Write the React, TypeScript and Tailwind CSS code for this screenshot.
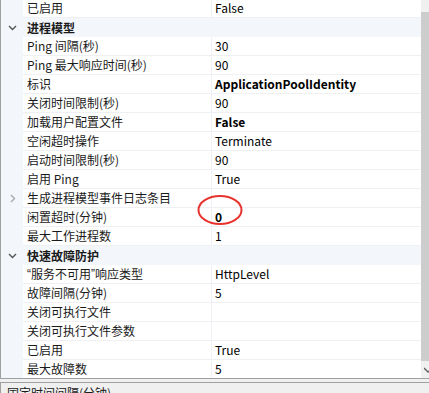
import React from "react"

type Row =
  | { kind: "cat"; name: string }
  | { kind: "prop"; name: React.ReactNode; value?: string; bold?: boolean; expand?: boolean }

const q = (c: string) => <span style={{ fontFamily: '"Liberation Sans", sans-serif' }}>{c}</span>

const rows: Row[] = [
  { kind: "prop", name: "已启用", value: "False" },
  { kind: "cat", name: "进程模型" },
  { kind: "prop", name: "Ping 间隔(秒)", value: "30" },
  { kind: "prop", name: "Ping 最大响应时间(秒)", value: "90" },
  { kind: "prop", name: "标识", value: "ApplicationPoolIdentity", bold: true },
  { kind: "prop", name: "关闭时间限制(秒)", value: "90" },
  { kind: "prop", name: "加载用户配置文件", value: "False", bold: true },
  { kind: "prop", name: "空闲超时操作", value: "Terminate" },
  { kind: "prop", name: "启动时间限制(秒)", value: "90" },
  { kind: "prop", name: "启用 Ping", value: "True" },
  { kind: "prop", name: "生成进程模型事件日志条目", expand: true },
  { kind: "prop", name: "闲置超时(分钟)", value: "0", bold: true },
  { kind: "prop", name: "最大工作进程数", value: "1" },
  { kind: "cat", name: "快速故障防护" },
  {
    kind: "prop",
    name: (
      <>
        {q("“")}服务不可用{q("”")}响应类型
      </>
    ),
    value: "HttpLevel",
  },
  { kind: "prop", name: "故障间隔(分钟)", value: "5" },
  { kind: "prop", name: "关闭可执行文件" },
  { kind: "prop", name: "关闭可执行文件参数" },
  { kind: "prop", name: "已启用", value: "True" },
  { kind: "prop", name: "最大故障数", value: "5" },
]

function ChevronDown() {
  return (
    <svg width="9" height="6" viewBox="0 0 9 6" className="text-[#555]">
      <path d="M1 1 L4.5 4.5 L8 1" fill="none" stroke="currentColor" strokeWidth="1.4" />
    </svg>
  )
}

function ChevronRight() {
  return (
    <svg width="6" height="9" viewBox="0 0 6 9" className="text-[#a8a8a8]">
      <path d="M1 1 L4.5 4.5 L1 8" fill="none" stroke="currentColor" strokeWidth="1.4" />
    </svg>
  )
}

export default function App() {
  return (
    <div
      className="flex h-[393px] w-[429px] flex-col overflow-hidden bg-[#f0f0f0] text-[12px] text-[#1a1a1a]"
      style={{ fontFamily: '"Segoe UI", "Noto Sans CJK SC", sans-serif' }}
    >
      <div className="flex h-[379px] shrink-0 border-b border-l border-[#a0a0a0] bg-white">
        <div className="relative flex-1 overflow-hidden">
          <div className="-mt-[1px] flex flex-col">
            {rows.map((r, i) =>
              r.kind === "cat" ? (
                <div key={i} className="flex h-[19px] items-center bg-[#f3f6fa]">
                  <div className="flex w-[22px] shrink-0 justify-center pl-[1px]">
                    <ChevronDown />
                  </div>
                  <span className="pl-[4px] font-bold">{r.name}</span>
                </div>
              ) : (
                <div key={i} className="flex h-[19px]">
                  <div className="flex w-[22px] shrink-0 items-center justify-center bg-[#f3f6fa] pl-[2px]">
                    {r.expand && <ChevronRight />}
                  </div>
                  <div className="flex w-[189px] shrink-0 items-center border-b border-r border-[#eef0f3] pl-[4px] whitespace-nowrap">
                    {r.name}
                  </div>
                  <div
                    className={
                      "flex flex-1 items-center border-b border-[#eef0f3] pl-[3px] whitespace-nowrap " +
                      (r.bold ? "font-bold text-black" : "text-black")
                    }
                  >
                    {r.value}
                  </div>
                </div>
              )
            )}
          </div>
          <svg
            className="pointer-events-none absolute left-[196px] top-[194px]"
            width="46"
            height="32"
            viewBox="0 0 46 32"
          >
            <ellipse cx="23" cy="16" rx="21.5" ry="14" fill="none" stroke="#e8322e" strokeWidth="2" />
          </svg>
        </div>
        <div className="flex w-[8px] shrink-0 flex-col bg-[#f0f0f0]">
          <div className="h-[12px]" />
          <div className="h-[349px] bg-[#cdcdcd]" />
          <div className="flex flex-1 items-center justify-end">
            <svg width="5" height="6" viewBox="0 0 5 6">
              <path d="M0 1 L4 5 L5 4" fill="none" stroke="#606060" strokeWidth="1.4" />
            </svg>
          </div>
        </div>
      </div>
      <div className="mt-[3px] flex-1 border-l border-t border-[#a0a0a0] bg-[#f0f0f0] pl-[6px] pt-[2px] leading-[16px] whitespace-nowrap">
        固定时间间隔(分钟)
      </div>
    </div>
  )
}
